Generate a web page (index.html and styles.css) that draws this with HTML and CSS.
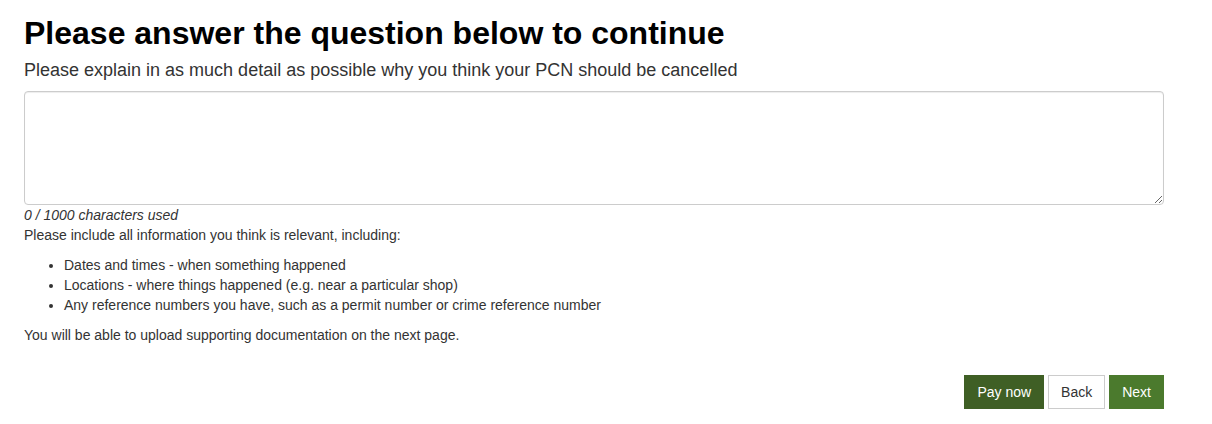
FILE: index.html
```html
<!DOCTYPE html>
<html lang="en">
<head>
<meta charset="utf-8">
<title>Question</title>
<link rel="stylesheet" href="styles.css">
</head>
<body>
<main class="page">
  <h1 class="title">Please answer the question below to continue</h1>
  <label class="question" for="answer">Please explain in as much detail as possible why you think your PCN should be cancelled</label>
  <textarea id="answer" class="answer"></textarea>
  <div class="counter">0 / 1000 characters used</div>
  <p class="hint">Please include all information you think is relevant, including:</p>
  <ul class="list">
    <li>Dates and times - when something happened</li>
    <li>Locations - where things happened (e.g. near a particular shop)</li>
    <li>Any reference numbers you have, such as a permit number or crime reference number</li>
  </ul>
  <p class="hint">You will be able to upload supporting documentation on the next page.</p>
  <div class="actions">
    <button class="btn btn-pay">Pay now</button>
    <button class="btn btn-back">Back</button>
    <button class="btn btn-next">Next</button>
  </div>
</main>
</body>
</html>
```

FILE: styles.css
```css
html, body {
  margin: 0;
  padding: 0;
  background: #fff;
}
body {
  font-family: "Liberation Sans", Arial, Helvetica, sans-serif;
  font-size: 14px;
  line-height: 20px;
  color: #333;
}
.page {
  width: 1140px;
  margin-left: 24px;
  display: flex;
  flex-direction: column;
}
.title {
  margin: 15px 0 0;
  font-size: 32px;
  line-height: 36px;
  font-weight: bold;
  color: #000;
}
.question {
  display: block;
  margin-top: 7px;
  font-size: 18px;
  line-height: 24px;
  color: #333;
}
.answer {
  display: block;
  box-sizing: border-box;
  width: 1140px;
  height: 114px;
  margin-top: 9px;
  border: 1px solid #ccc;
  border-radius: 4px;
  box-shadow: inset 0 1px 1px rgba(0,0,0,.075);
  font-family: inherit;
  font-size: 14px;
  resize: vertical;
}
.counter {
  font-style: italic;
  line-height: 20px;
}
.hint {
  margin: 0 0 10px;
}
.list {
  margin: 0 0 10px;
  padding-left: 40px;
}
.actions {
  display: flex;
  justify-content: flex-end;
  gap: 4px;
  margin-top: 20px;
}
.btn {
  font-family: inherit;
  font-size: 14px;
  line-height: 20px;
  padding: 6px 12px;
  border: 1px solid transparent;
  border-radius: 0;
  cursor: pointer;
}
.btn-pay {
  background: #3f5f25;
  color: #fff;
}
.btn-back {
  background: #fff;
  border-color: #ccc;
  color: #333;
}
.btn-next {
  background: #4b7a2d;
  color: #fff;
}
```
